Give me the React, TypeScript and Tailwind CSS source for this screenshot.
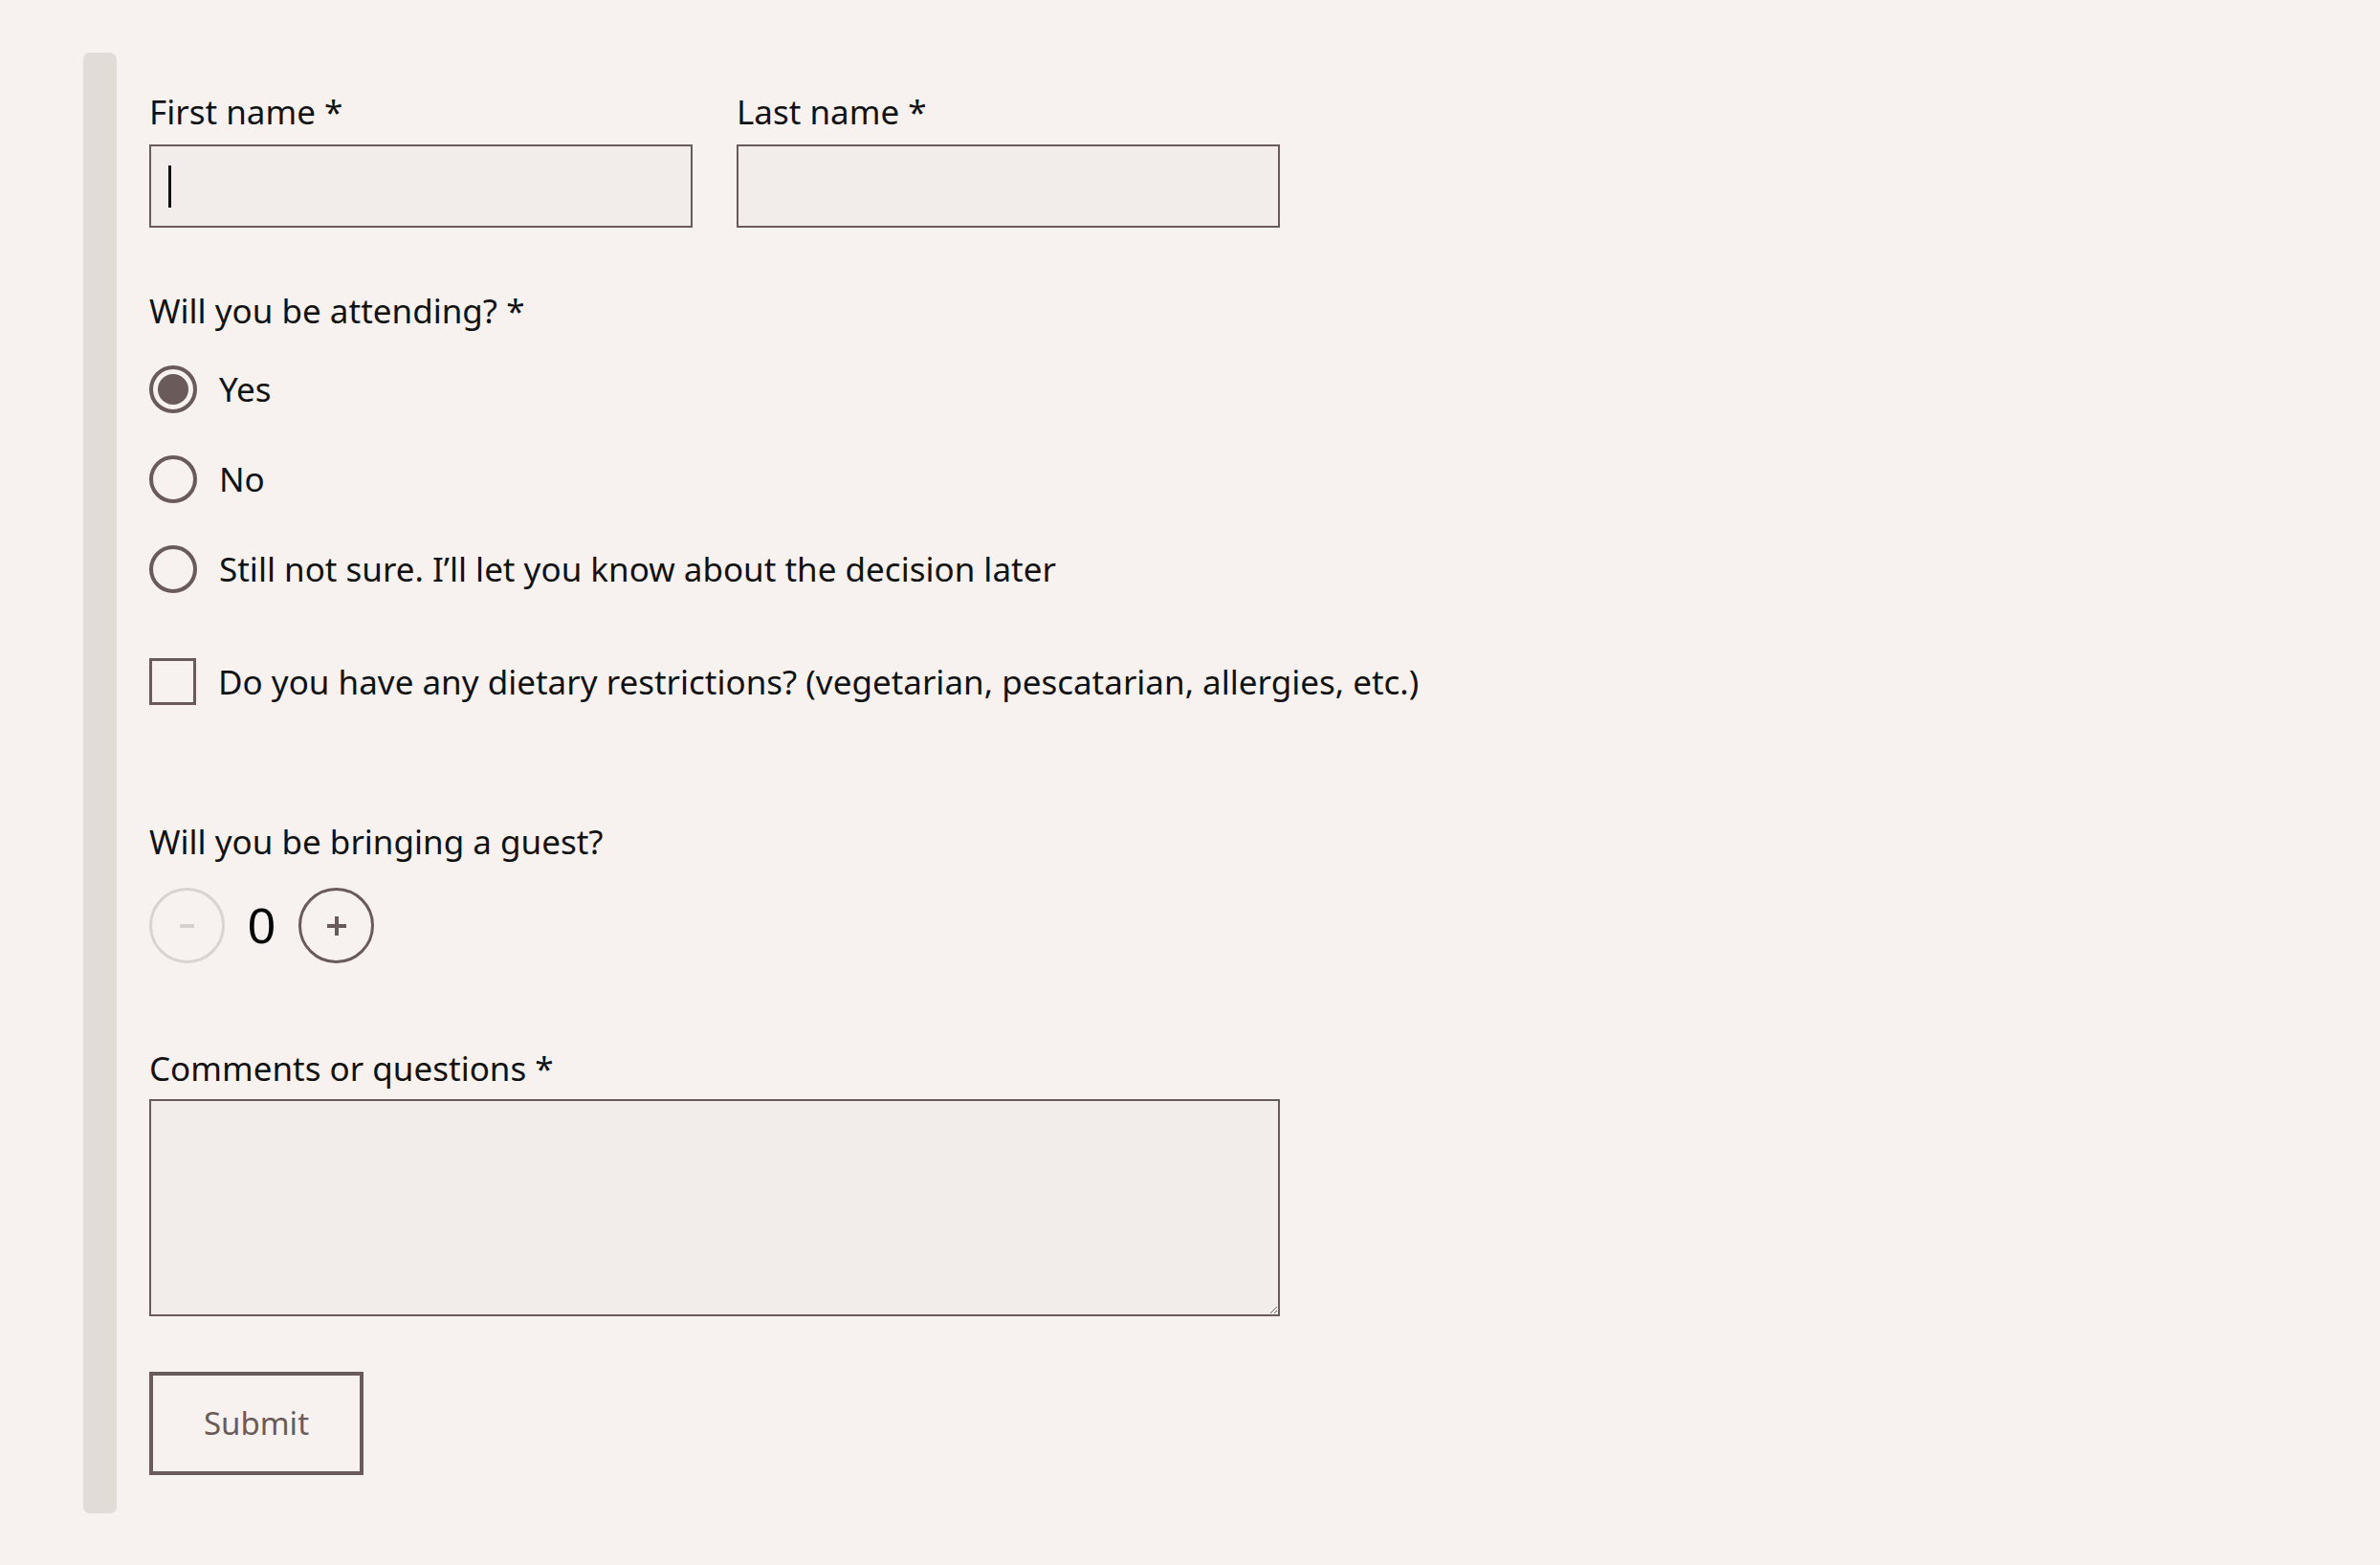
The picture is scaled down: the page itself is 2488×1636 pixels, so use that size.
import { useState } from 'react';

const FONT = { fontFamily: '"Noto Sans", "Open Sans", sans-serif' };

function Radio({ label, checked, onSelect }: { label: string; checked: boolean; onSelect: () => void }) {
  return (
    <label className="flex h-[50px] items-center gap-[23px] cursor-pointer" onClick={onSelect}>
      <span className="flex h-[50px] w-[50px] shrink-0 items-center justify-center rounded-full border-[4px] border-[#6b5a5a]">
        {checked && <span className="h-[32px] w-[32px] rounded-full bg-[#6b5a5a]" />}
      </span>
      <span className="text-[35px] leading-[40px] text-[#111]">{label}</span>
    </label>
  );
}

export default function App() {
  const [attending, setAttending] = useState('yes');
  const [dietary, setDietary] = useState(false);
  const [guests, setGuests] = useState(0);

  return (
    <div className="min-h-screen bg-[#f7f2ef] pt-[55px] pl-[87px]" style={FONT}>
      <div className="flex items-stretch">
        {/* Side rail */}
        <div className="w-[35px] shrink-0 rounded-[7px] bg-[#e2dcd9]" />

        <form className="flex flex-col pl-[34px] pt-[42px] pb-[40px]" onSubmit={(e) => e.preventDefault()}>
          {/* Name row */}
          <div className="flex gap-[46px]">
            <div className="flex w-[568px] flex-col">
              <span className="h-[40px] text-[35px] leading-[40px] text-[#111]">First name *</span>
              <div className="relative mt-[14px]">
                <input className="h-[87px] w-full border-2 border-[#6b5a5a] bg-[#f2edea] px-[20px] text-[35px] outline-none caret-transparent" />
                <span className="absolute left-[20px] top-[22px] h-[44px] w-[3px] bg-[#111]" />
              </div>
            </div>
            <div className="flex w-[568px] flex-col">
              <span className="h-[40px] text-[35px] leading-[40px] text-[#111]">Last name *</span>
              <input className="mt-[14px] h-[87px] w-full border-2 border-[#6b5a5a] bg-[#f2edea] px-[20px] text-[35px] outline-none" />
            </div>
          </div>

          {/* Attending */}
          <span className="mt-[67px] h-[40px] text-[35px] leading-[40px] text-[#111]">Will you be attending? *</span>
          <div className="mt-[37px] flex flex-col gap-[44px]">
            <Radio label="Yes" checked={attending === 'yes'} onSelect={() => setAttending('yes')} />
            <Radio label="No" checked={attending === 'no'} onSelect={() => setAttending('no')} />
            <Radio
              label="Still not sure. I’ll let you know about the decision later"
              checked={attending === 'maybe'}
              onSelect={() => setAttending('maybe')}
            />
          </div>

          {/* Dietary */}
          <label className="mt-[68px] flex h-[49px] items-center gap-[23px] cursor-pointer" onClick={() => setDietary(!dietary)}>
            <span className="flex h-[49px] w-[49px] shrink-0 items-center justify-center border-[3px] border-[#6b5a5a]">
              {dietary && <span className="h-[29px] w-[29px] bg-[#6b5a5a]" />}
            </span>
            <span className="text-[35px] leading-[40px] text-[#111]">
              Do you have any dietary restrictions? (vegetarian, pescatarian, allergies, etc.)
            </span>
          </label>

          {/* Guests */}
          <span className="mt-[123px] h-[40px] text-[35px] leading-[40px] text-[#111]">Will you be bringing a guest?</span>
          <div className="mt-[28px] flex h-[79px] items-center gap-[24px]">
            <button
              type="button"
              onClick={() => setGuests(Math.max(0, guests - 1))}
              className={`flex h-[79px] w-[79px] items-center justify-center rounded-full border-[3px] ${guests === 0 ? 'border-[#d9d4d1]' : 'border-[#6b5a5a]'}`}
            >
              <svg width="15" height="4" viewBox="0 0 15 4">
                <rect width="15" height="4" fill={guests === 0 ? '#d6d0ce' : '#6b5a5a'} />
              </svg>
            </button>
            <span className="w-[29px] text-center text-[52px] leading-none text-black" style={{ fontFamily: '"Liberation Sans", Arial, sans-serif' }}>
              {guests}
            </span>
            <button
              type="button"
              onClick={() => setGuests(guests + 1)}
              className="flex h-[79px] w-[79px] items-center justify-center rounded-full border-[3px] border-[#6b5a5a]"
            >
              <svg width="20" height="20" viewBox="0 0 20 20">
                <rect x="8" y="0" width="4" height="20" fill="#6b5a5a" />
                <rect x="0" y="8" width="20" height="4" fill="#6b5a5a" />
              </svg>
            </button>
          </div>

          {/* Comments */}
          <span className="mt-[90px] h-[40px] text-[35px] leading-[40px] text-[#111]">Comments or questions *</span>
          <textarea className="mt-[12px] h-[227px] w-[1182px] border-2 border-[#6b5a5a] bg-[#f2edea] p-[16px] text-[35px] outline-none" />

          {/* Submit */}
          <button
            type="submit"
            className="mt-[58px] h-[108px] w-[224px] border-[4px] border-[#6b5a5a] text-[33px] text-[#6b5a5a]"
          >
            Submit
          </button>
        </form>
      </div>
    </div>
  );
}
